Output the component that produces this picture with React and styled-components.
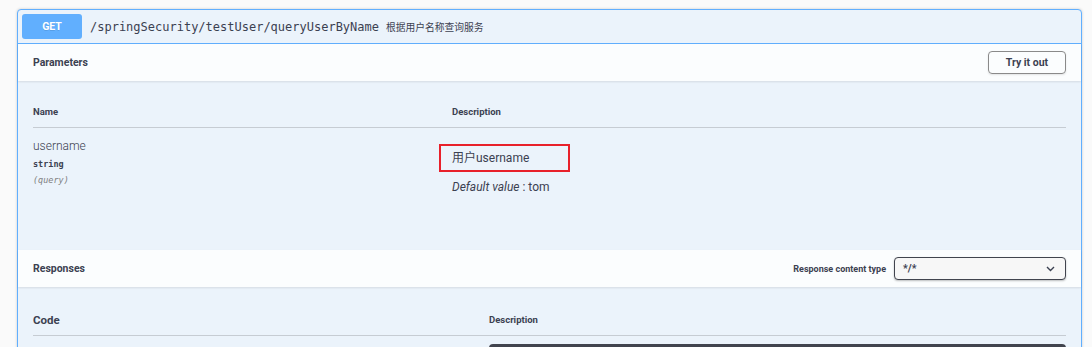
import React from 'react';
import styled, { createGlobalStyle } from 'styled-components';

const GlobalStyle = createGlobalStyle`
  html, body {
    margin: 0;
    padding: 0;
    background: #fafafa;
  }
  body {
    font-family: Roboto, "Noto Sans CJK SC", sans-serif;
    color: #3b4151;
  }
`;

const Page = styled.div`
  padding: 9px 10px 0 17px;
  height: 347px;
  box-sizing: border-box;
  overflow: hidden;
`;

const OpBlock = styled.div`
  border: 1px solid #61affe;
  border-radius: 4px;
  background: #ebf3fb;
  box-shadow: 0 0 3px rgba(0, 0, 0, 0.19);
`;

const Summary = styled.div`
  display: flex;
  align-items: center;
  padding: 4px;
  border-bottom: 1px solid #61affe;
`;

const Method = styled.span`
  width: 60px;
  height: 25px;
  display: flex;
  align-items: center;
  justify-content: center;
  background: #61affe;
  border-radius: 3px;
  color: #fff;
  font-weight: 700;
  font-size: 10.5px;
  text-shadow: 0 1px 0 rgba(0, 0, 0, 0.1);
`;

const Path = styled.span`
  margin-left: 8px;
  font-family: "DejaVu Sans Mono", "Liberation Mono", monospace;
  font-size: 12px;
  color: #3b4151;
`;

const Summary2 = styled.span`
  margin-left: 7px;
  font-size: 9.75px;
  font-family: "Noto Sans CJK SC", sans-serif;
  color: #3b4151;
`;

const SectionHeader = styled.div`
  display: flex;
  align-items: center;
  justify-content: space-between;
  min-height: 37px;
  padding: 0 15px;
  background: rgba(255, 255, 255, 0.8);
  box-shadow: 0 1px 2px rgba(0, 0, 0, 0.1);
`;

const SectionTitle = styled.h4`
  margin: 0;
  font-size: 10.5px;
  font-weight: 700;
  color: #3b4151;
`;

const TryButton = styled.button`
  width: 78px;
  height: 23px;
  border: 1.5px solid #8a8a8a;
  border-radius: 4px;
  background: transparent;
  box-shadow: 0 1px 2px rgba(0, 0, 0, 0.1);
  font-family: Roboto, sans-serif;
  font-size: 10.5px;
  font-weight: 700;
  color: #3b4151;
  padding: 0;
`;

const TableWrap = styled.div`
  padding: ${p => p.$top}px 15px ${p => p.$bottom}px;
`;

const HeadRow = styled.div`
  display: grid;
  grid-template-columns: ${p => p.$col}px 1fr;
  border-bottom: 1px solid #c6ccd3;
  padding: 9px 0 8px;
`;

const Th = styled.div`
  font-size: ${p => p.$size || 9.5}px;
  font-weight: 700;
  color: #3b4151;
  line-height: 14px;
`;

const Row = styled.div`
  display: grid;
  grid-template-columns: 419px 1fr;
  padding-top: 10px;
`;

const NameCell = styled.div`
  display: flex;
  flex-direction: column;
`;

const ParamName = styled.div`
  font-size: 12px;
  font-weight: 300;
  line-height: 16px;
  color: #3b4151;
`;

const ParamType = styled.div`
  margin-top: 3px;
  font-family: "DejaVu Sans Mono", monospace;
  font-size: 8.5px;
  font-weight: 700;
  line-height: 14px;
`;

const ParamIn = styled.div`
  margin-top: 2px;
  font-family: "DejaVu Sans Mono", monospace;
  font-size: 8.5px;
  font-style: italic;
  color: #808080;
  line-height: 14px;
`;

const Marked = styled.div`
  width: 131px;
  height: 28px;
  box-sizing: border-box;
  margin: 6px 0 0 -13px;
  padding: 0 0 3px 11px;
  display: flex;
  align-items: center;
  border: 2px solid #e8202a;
  font-size: 12px;
  color: #3b4151;
`;

const DefaultValue = styled.div`
  margin-top: 8px;
  font-size: 12px;
  line-height: 14px;
  color: #3b4151;
  i { font-weight: 400; }
`;

const ContentType = styled.div`
  display: flex;
  align-items: center;
  gap: 8px;
`;

const Label = styled.span`
  font-size: 9px;
  font-weight: 700;
  color: #3b4151;
`;

const Select = styled.div`
  width: 172px;
  height: 23px;
  box-sizing: border-box;
  display: flex;
  align-items: center;
  justify-content: space-between;
  padding: 0 10px 0 8px;
  border: 1.5px solid #41444e;
  border-radius: 4px;
  background: #f7f7f7;
  box-shadow: 0 1px 2px rgba(0, 0, 0, 0.25);
  font-size: 10.5px;
  font-weight: 700;
  color: #3b4151;
`;

const CodeBlock = styled.div`
  margin: 8px 0 0 456px;
  height: 20px;
  background: #41444e;
  border-radius: 4px;
`;

const Chevron = () => (
  <svg width="9" height="6" viewBox="0 0 9 6">
    <path d="M1 1l3.5 3.5L8 1" fill="none" stroke="#3b4151" strokeWidth="1.4" />
  </svg>
);

export default function App() {
  return (
    <>
      <GlobalStyle />
      <Page>
        <OpBlock>
          <Summary>
            <Method>GET</Method>
            <Path>/springSecurity/testUser/queryUserByName</Path>
            <Summary2>根据用户名称查询服务</Summary2>
          </Summary>

          <SectionHeader>
            <SectionTitle>Parameters</SectionTitle>
            <TryButton>Try it out</TryButton>
          </SectionHeader>

          <TableWrap $top={15} $bottom={56}>
            <HeadRow $col={419}>
              <Th>Name</Th>
              <Th>Description</Th>
            </HeadRow>
            <Row>
              <NameCell>
                <ParamName>username</ParamName>
                <ParamType>string</ParamType>
                <ParamIn>(query)</ParamIn>
              </NameCell>
              <div>
                <Marked>用户username</Marked>
                <DefaultValue><i>Default value</i> : tom</DefaultValue>
              </div>
            </Row>
          </TableWrap>

          <SectionHeader>
            <SectionTitle>Responses</SectionTitle>
            <ContentType>
              <Label>Response content type</Label>
              <Select>
                <span>*/*</span>
                <Chevron />
              </Select>
            </ContentType>
          </SectionHeader>

          <TableWrap $top={17} $bottom={0}>
            <HeadRow $col={456}>
              <Th $size={11.5}>Code</Th>
              <Th>Description</Th>
            </HeadRow>
            <CodeBlock />
          </TableWrap>
        </OpBlock>
      </Page>
    </>
  );
}
